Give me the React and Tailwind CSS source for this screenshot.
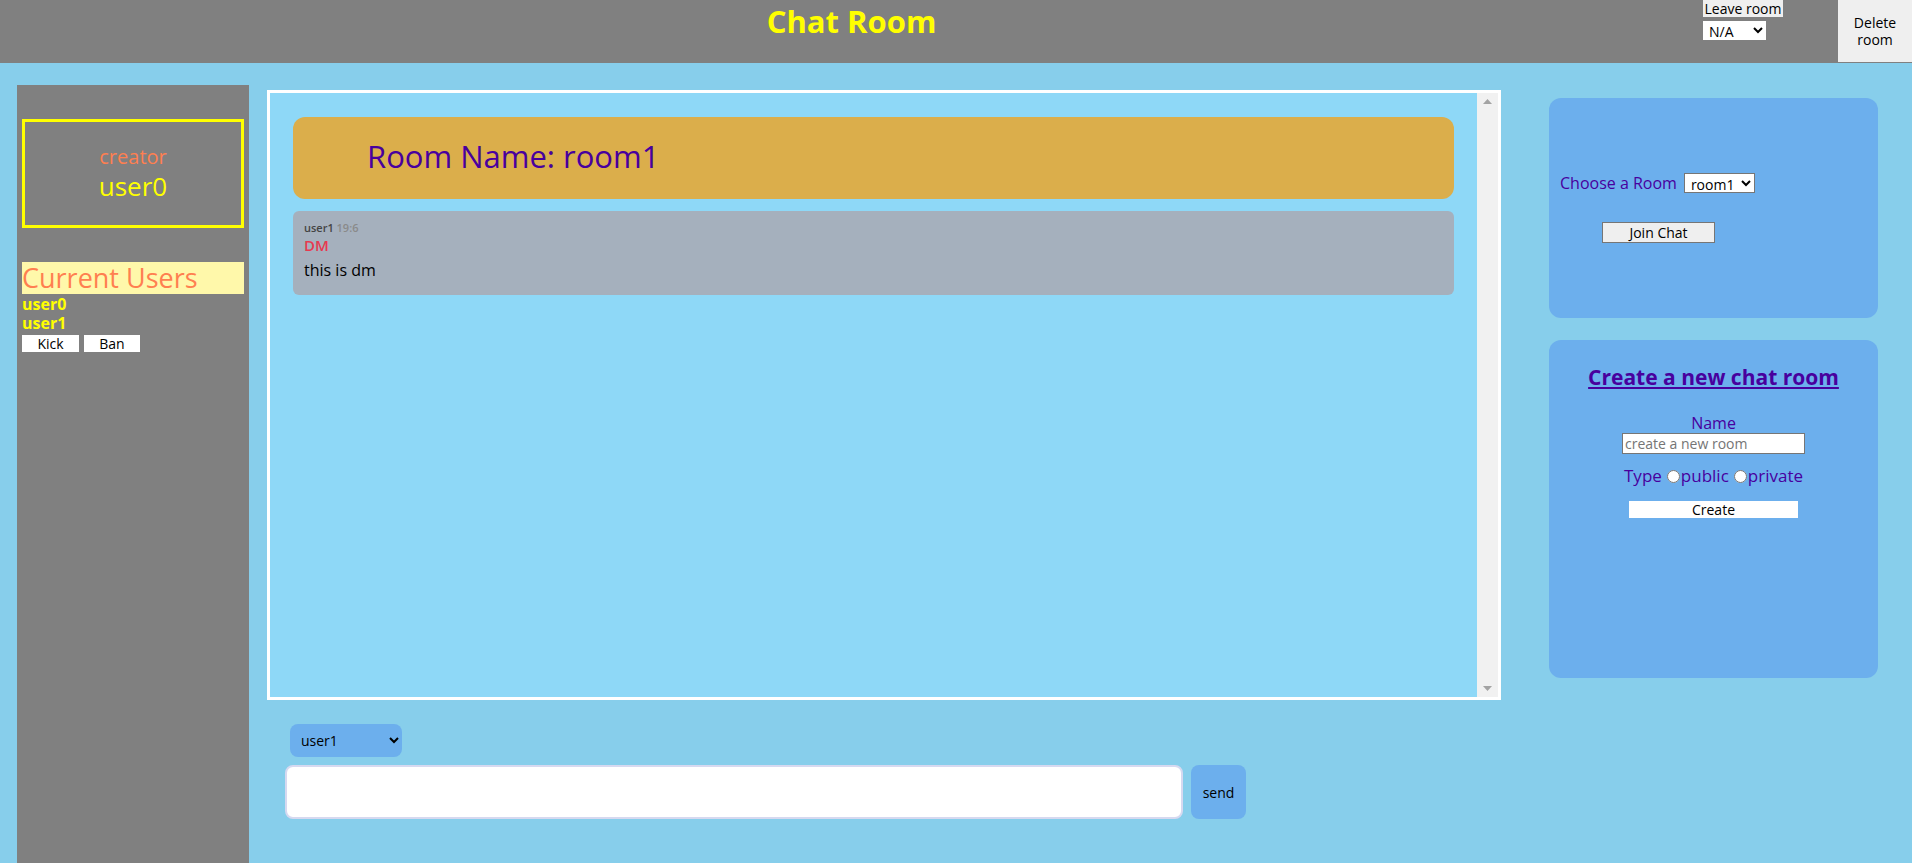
import React from 'react';

const Scrollbar = () => (
  <div className="w-[21px] shrink-0 bg-[#f1f1f1] flex flex-col items-center justify-between py-[6px]">
    <svg width="9" height="5" viewBox="0 0 9 5"><path d="M0 5 L4.5 0 L9 5 Z" fill="#a3a3a3" /></svg>
    <svg width="9" height="5" viewBox="0 0 9 5"><path d="M0 0 L4.5 5 L9 0 Z" fill="#a3a3a3" /></svg>
  </div>
);

export default function App() {
  return (
    <div className="h-screen flex flex-col overflow-hidden bg-[#87ceeb] font-['Open_Sans',sans-serif]">
      {/* top bar */}
      <header className="h-[63px] shrink-0 bg-[#808080] flex">
        <h1 className="flex-1 text-center text-[31px] font-bold leading-[42px] text-[#ffff00]">Chat Room</h1>
        <div className="w-[80px] flex flex-col items-start">
          <button className="w-[80px] h-[17px] bg-[#efefef] text-[14px] leading-[17px] text-black">Leave room</button>
          <select className="mt-[4px] w-[63px] h-[19px] bg-white text-[14px] leading-[17px] text-black px-[2px]" defaultValue="na">
            <option value="na">N/A</option>
          </select>
        </div>
        <button className="ml-[55px] w-[74px] h-[62px] bg-[#efefef] text-[14px] leading-[17px] text-black">
          Delete<br />room
        </button>
      </header>

      <div className="flex-1 flex items-stretch min-h-0">
        {/* sidebar */}
        <aside className="mt-[22px] ml-[17px] w-[232px] shrink-0 bg-[#808080] px-[5px] pt-[34px]">
          <div className="h-[109px] border-[3px] border-[#ffff00] flex flex-col items-center justify-center">
            <div className="text-[20px] leading-[24px] text-[#ff7f50]">creator</div>
            <div className="text-[26px] leading-[34px] text-[#ffff00]">user0</div>
          </div>
          <div className="mt-[34px] h-[32px] bg-[#fff8aa] text-[27px] leading-[32px] text-[#ff7f50] whitespace-nowrap">Current Users</div>
          <div className="mt-[1px] text-[16px] font-bold leading-[19px] text-[#ffff00]">user0</div>
          <div className="text-[16px] font-bold leading-[19px] text-[#ffff00]">user1</div>
          <div className="mt-[2px] flex gap-[5px]">
            <button className="w-[57px] h-[17px] bg-white text-[14px] leading-[17px] text-black">Kick</button>
            <button className="w-[56px] h-[17px] bg-white text-[14px] leading-[17px] text-black">Ban</button>
          </div>
        </aside>

        {/* chat column */}
        <main className="ml-[18px] w-[1234px] shrink-0 flex flex-col">
          <div className="mt-[27px] h-[610px] border-[3px] border-white bg-[#8ed8f7] flex">
            <div className="flex-1 pl-[23px] pr-[23px] pt-[24px]">
              <div className="h-[82px] rounded-xl bg-[#dbae4b] flex items-center pl-[74px] pb-[4px]">
                <h2 className="text-[31px] leading-[40px] text-[#48009e]">Room Name: room1</h2>
              </div>
              <div className="mt-[12px] h-[84px] rounded-md bg-[#a5b0bd] pl-[11px] pt-[9px]">
                <div className="text-[11px] leading-[16px]">
                  <span className="font-semibold text-[#444]">user1</span>{' '}
                  <span className="font-semibold text-[#8a8a8a]">19:6</span>
                </div>
                <div className="text-[15px] font-semibold leading-[18px] text-[#e8384f]">DM</div>
                <div className="mt-[6px] text-[16px] leading-[21px] text-black">this is dm</div>
              </div>
            </div>
            <Scrollbar />
          </div>

          <div className="mt-[24px] ml-[23px]">
            <select className="w-[112px] h-[33px] rounded-lg bg-[#6cafed] text-[14px] text-black pl-[7px]" defaultValue="user1">
              <option value="user1">user1</option>
            </select>
          </div>
          <div className="mt-[8px] ml-[18px] flex gap-[8px]">
            <div className="w-[898px] h-[54px] rounded-lg bg-white border-2 border-[#d6d9f0]" />
            <button className="w-[55px] h-[54px] rounded-lg bg-[#6cafed] text-[14px] text-black">send</button>
          </div>
        </main>

        {/* right column */}
        <section className="ml-[48px] w-[329px] shrink-0 flex flex-col">
          <div className="mt-[35px] h-[220px] rounded-xl bg-[#6cafed] pl-[11px] pt-[75px]">
            <div className="flex items-center h-[20px]">
              <span className="text-[16px] text-[#48009e] leading-[20px]">Choose a Room</span>
              <select className="ml-[7px] w-[71px] h-[20px] border border-[#767676] bg-white text-[14px] text-black px-[2px]" defaultValue="room1">
                <option value="room1">room1</option>
              </select>
            </div>
            <button className="mt-[29px] ml-[42px] w-[113px] h-[21px] border border-[#767676] bg-[#efefef] text-[14px] leading-[19px] text-black">Join Chat</button>
          </div>

          <div className="mt-[22px] h-[338px] rounded-xl bg-[#6cafed] pt-[23px] flex flex-col items-center">
            <h3 className="text-[21px] font-bold leading-[28px] underline text-[#48009e]">Create a new chat room</h3>
            <div className="mt-[22px] text-[16px] leading-[20px] text-[#48009e]">Name</div>
            <input
              className="w-[183px] h-[21px] border border-[#767676] bg-white text-[14px] px-[2px] placeholder:text-[#757575]"
              placeholder="create a new room"
            />
            <div className="mt-[11px] flex items-center text-[17px] leading-[22px] text-[#48009e]">
              <span>Type</span>
              <input type="radio" name="type" className="ml-[5px] mr-[1px] w-[13px] h-[13px]" />
              <span>public</span>
              <input type="radio" name="type" className="ml-[5px] mr-[1px] w-[13px] h-[13px]" />
              <span>private</span>
            </div>
            <button className="mt-[14px] w-[169px] h-[17px] bg-white text-[14px] leading-[17px] text-black">Create</button>
          </div>
        </section>
      </div>
    </div>
  );
}
